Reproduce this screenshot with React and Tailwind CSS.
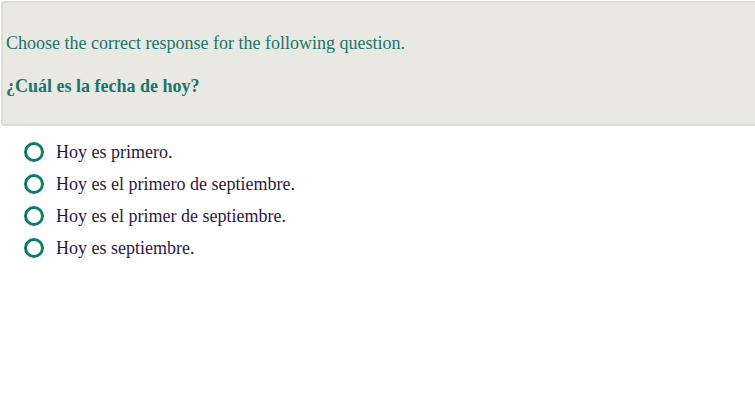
import React from 'react';

const OPTIONS = [
  'Hoy es primero.',
  'Hoy es el primero de septiembre.',
  'Hoy es el primer de septiembre.',
  'Hoy es septiembre.',
];

export default function App() {
  return (
    <div className="min-h-[400px] bg-white pt-px pl-px font-['Liberation_Serif',serif]">
      {/* Question prompt */}
      <div className="h-[125px] w-[770px] rounded-[3px] border-2 border-[#dcdcd4] bg-[#e9e8e2] px-[3px] pt-[29px] text-[#19766a]">
        <p className="text-[18px] leading-[22px]">Choose the correct response for the following question.</p>
        <p className="mt-[21px] text-[18px] font-bold leading-[22px]">¿Cuál es la fecha de hoy?</p>
      </div>

      {/* Answer choices */}
      <ul className="mt-[15px] flex flex-col gap-[10px] pl-[23px]">
        {OPTIONS.map((opt) => (
          <li key={opt} className="flex h-[22px] items-center gap-[12px]">
            <span className="h-[20px] w-[20px] shrink-0 rounded-full border-[3px] border-[#157a6c]" />
            <span className="text-[18px] leading-[22px] text-[#2b1842]">{opt}</span>
          </li>
        ))}
      </ul>
    </div>
  );
}
